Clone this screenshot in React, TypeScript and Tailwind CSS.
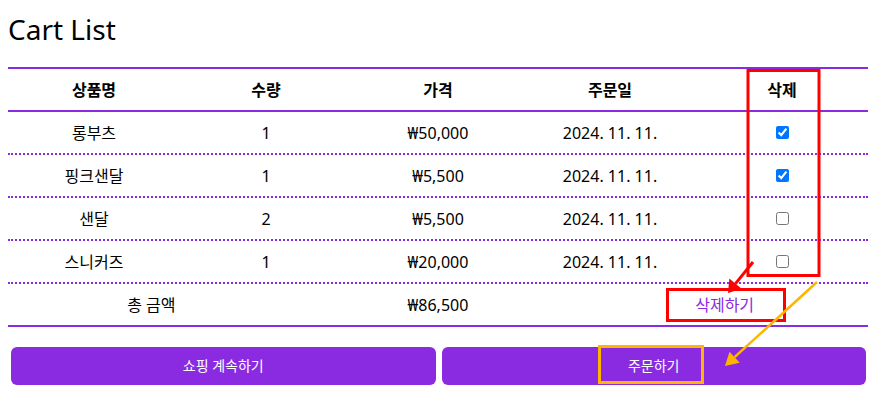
import React, { useState } from "react";

interface CartItem {
  id: number;
  name: string;
  qty: number;
  price: number;
  date: string;
}

const items: CartItem[] = [
  { id: 1, name: "롱부츠", qty: 1, price: 50000, date: "2024. 11. 11." },
  { id: 2, name: "핑크샌달", qty: 1, price: 5500, date: "2024. 11. 11." },
  { id: 3, name: "샌달", qty: 2, price: 5500, date: "2024. 11. 11." },
  { id: 4, name: "스니커즈", qty: 1, price: 20000, date: "2024. 11. 11." },
];

const won = (n: number) => "₩" + n.toLocaleString("en-US");

export default function App() {
  const [checked, setChecked] = useState<number[]>([1, 2]);

  const toggle = (id: number) =>
    setChecked((prev) => (prev.includes(id) ? prev.filter((x) => x !== id) : [...prev, id]));

  const total = items.reduce((sum, it) => sum + it.price * it.qty, 0);

  return (
    <div
      className="relative w-[879px] h-[400px] bg-white text-black overflow-hidden"
      style={{ fontFamily: '"Noto Sans", "Noto Sans CJK KR", sans-serif' }}
    >
      <h1 className="ml-2 mt-[11px] mb-[20px] text-[28px] leading-[36px] font-normal">Cart List</h1>

      {/* Table */}
      <div className="ml-2 w-[860px] text-[16px]">
        <div className="grid grid-cols-5 h-[45px] items-center border-y-2 border-[#8a2be2] font-bold text-center">
          <div>상품명</div>
          <div>수량</div>
          <div>가격</div>
          <div>주문일</div>
          <div>삭제</div>
        </div>

        {items.map((it) => (
          <div
            key={it.id}
            className="grid grid-cols-5 h-[43px] items-center border-b-2 border-dotted border-[#8a2be2] text-center"
          >
            <div>{it.name}</div>
            <div>{it.qty}</div>
            <div>{won(it.price)}</div>
            <div>{it.date}</div>
            <div className="flex justify-center">
              <input
                type="checkbox"
                className="w-[13px] h-[13px]"
                checked={checked.includes(it.id)}
                onChange={() => toggle(it.id)}
              />
            </div>
          </div>
        ))}

        <div className="grid grid-cols-3 h-[43px] items-center border-b-2 border-[#8a2be2] text-center">
          <div>총 금액</div>
          <div>{won(total)}</div>
          <div>
            <button className="text-[#8a2be2] bg-transparent">삭제하기</button>
          </div>
        </div>
      </div>

      {/* Buttons */}
      <div className="flex gap-[6px] ml-[11px] w-[855px] mt-[20px]">
        <button className="flex-1 h-[38px] rounded-md bg-[#8a2be2] text-white text-sm">쇼핑 계속하기</button>
        <button className="flex-1 h-[38px] rounded-md bg-[#8a2be2] text-white text-sm">주문하기</button>
      </div>

      {/* Annotations */}
      <svg className="absolute inset-0 pointer-events-none" width="879" height="400" viewBox="0 0 879 400">
        <rect x="748" y="70.5" width="71" height="205" fill="none" stroke="#ff0000" strokeWidth="3" />
        <line x1="753" y1="262" x2="735.5" y2="283.6" stroke="#ff0000" strokeWidth="3" />
        <polygon points="728,293 741.7,288.7 729.3,278.6" fill="#ff0000" />
        <rect x="667.5" y="289.5" width="117" height="31" fill="none" stroke="#ff0000" strokeWidth="3" />

        <line x1="817" y1="282" x2="734.6" y2="357.2" stroke="#ffb400" strokeWidth="2.5" />
        <polygon points="725,366 739.7,362.8 729.5,351.7" fill="#ffb400" />
        <rect x="599.5" y="346.5" width="103" height="36" fill="none" stroke="#ffb400" strokeWidth="3" />
      </svg>
    </div>
  );
}
